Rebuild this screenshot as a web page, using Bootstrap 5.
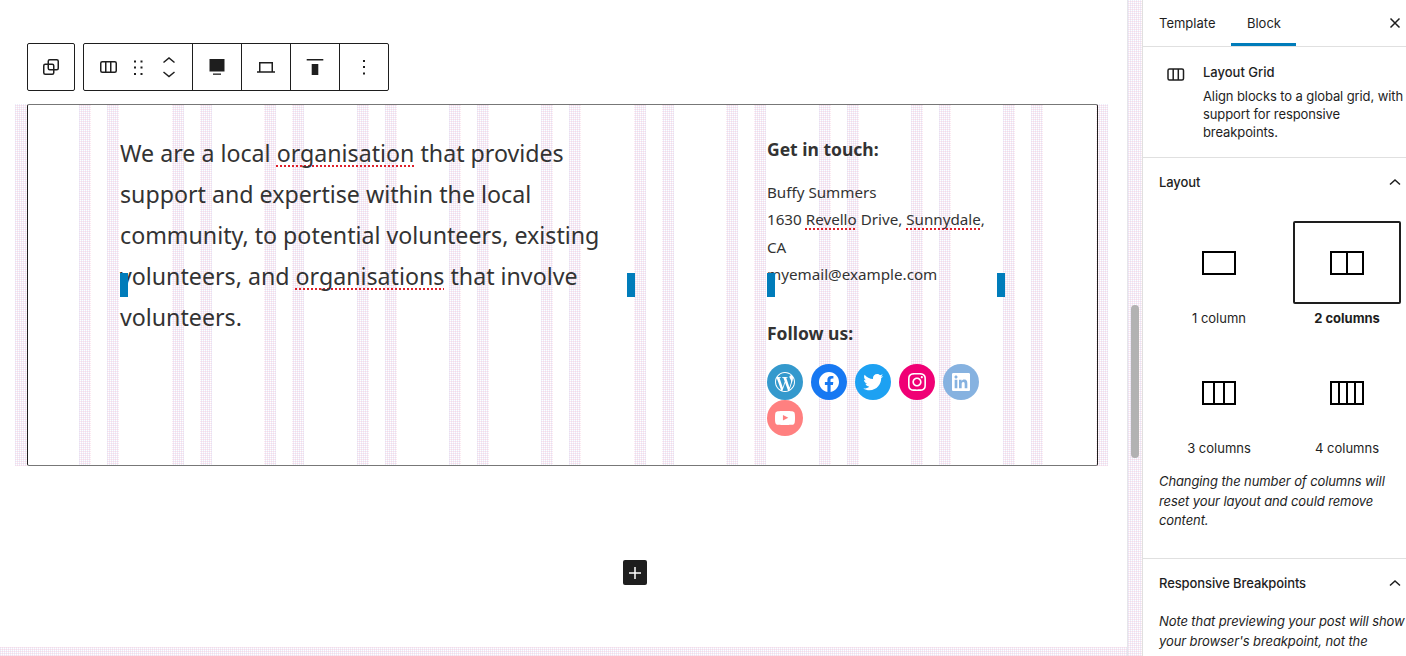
<!DOCTYPE html>
<html lang="en">
<head>
    <meta charset="UTF-8">
    <meta name="viewport" content="width=device-width, initial-scale=1.0">
    <link href="https://cdn.jsdelivr.net/npm/bootstrap@5.3.2/dist/css/bootstrap.min.css" rel="stylesheet"/>
    <script src="https://cdn.jsdelivr.net/npm/bootstrap@5.3.2/dist/js/bootstrap.bundle.min.js"></script>
    <title>Layout Grid</title>
    <style>
        html, body { height: 100%; overflow: hidden; }
        body { background: #fff; color: #1e1e1e; font-family: "Inter", "Liberation Sans", sans-serif; font-size: 13px; }
        .dither { background-image: repeating-linear-gradient(0deg, rgba(245,180,205,.3) 0 1px, transparent 1px 2px), repeating-linear-gradient(90deg, rgba(190,200,240,.3) 0 1px, transparent 1px 2px); }

        /* editor canvas */
        .canvas { width: 1127px; height: 656px; position: relative; overflow: hidden; flex: none; }
        .canvas-inner { padding: 43px 0 0 27px; width: 1098px; }
        .tb { height: 48px; border: 1px solid #1e1e1e; border-radius: 2px; background: #fff; }
        .tb-btn { width: 49px; height: 46px; border-right: 1px solid #1e1e1e; color: #1e1e1e; }
        .tb-btn:last-child { border-right: 0; width: 48px; }
        .tb-solo { width: 46px !important; }
        .tb-type { width: 109px; padding-left: 12px; }
        .drag-dots { margin-left: 9px; }
        .movers { margin-left: 10px; }
        .layout-block { margin-top: 13px; position: relative; height: 362px; }
        .grid-lines { position: absolute; top: 0; bottom: 0; left: -12px; width: 1094px; -webkit-mask-image: repeating-linear-gradient(90deg, #000 0 12px, transparent 12px 64.4px, #000 64.4px 76.4px, transparent 76.4px 92.4px); mask-image: repeating-linear-gradient(90deg, #000 0 12px, transparent 12px 64.4px, #000 64.4px 76.4px, transparent 76.4px 92.4px); }
        .block-frame { position: absolute; inset: 0; border: 1px solid #1e1e1e; border-top-color: #777; border-bottom-color: #777; border-radius: 2px; padding: 27px 0 0 92px; color: #333; font-family: "Noto Sans", sans-serif; }
        .intro-col { width: 647px; flex: none; font-size: 23.2px; line-height: 41px; padding-right: 130px; margin-top: 1px; }
        .contact-col { width: 240px; flex: none; font-size: 15.2px; line-height: 27.4px; }
        .contact-col h6 { font-size: 17.5px; font-weight: 700; line-height: 27px; margin: 0; font-family: "Noto Sans", sans-serif; }
        .spell { text-decoration: underline dotted #e0202a; text-decoration-thickness: 1.5px; text-underline-offset: 3px; text-decoration-skip-ink: none; }
        .handle { position: absolute; top: 169px; width: 8px; height: 24px; background: #007cba; }
        .h1-pos { left: 93px; } .h2-pos { left: 600px; } .h3-pos { left: 740px; } .h4-pos { left: 970px; }
        .follow-h { margin-top: 31px !important; }
        .soc-row { margin-top: 17px; column-gap: 8px; width: 220px; }
        .soc { width: 36px; height: 36px; border-radius: 50%; color: #fff; }
        .soc svg { width: 24px; height: 24px; fill: currentColor; }
        .soc-wp { background: #3499cd; } .soc-fb { background: #1778f2; } .soc-tw { background: #1da1f2; }
        .soc-ig { background: #f00075; } .soc-li { background: #86b2e0; } .soc-yt { background: #ff8080; }
        .add-btn { width: 24px; height: 25px; border-radius: 2px; background: #1e1e1e; color: #fff; margin: 94px 0 0 596px; }
        .next-block { position: absolute; left: 0; right: 0; bottom: 0; height: 9px; }
        .scroll-track { width: 15px; height: 656px; flex: none; position: relative; border-left: 1px solid #e6e6ea; }
        .scroll-thumb { position: absolute; left: 3px; top: 305px; width: 8px; height: 153px; border-radius: 4px; background: #b2b2b2; }

        /* settings sidebar */
        .side { width: 264px; flex: none; height: 656px; overflow: hidden; border-left: 1px solid #e0e0e0; letter-spacing: -.1px; }
        .side-tabs { height: 47px; border-bottom: 1px solid #e0e0e0; padding-left: 16px; position: relative; letter-spacing: 0; }
        .side-tab { line-height: 46px; font-size: 13px; }
        .tab-on { width: 65px; margin-left: 16px; text-align: center; border-bottom: 3px solid #007cba; height: 46px; line-height: 46px; }
        .close-x { position: absolute; right: 3px; top: 15px; }
        .block-card { height: 111px; border-bottom: 1px solid #e0e0e0; padding: 16px 0 0 24px; }
        .block-card p { line-height: 18px; margin: 0; white-space: nowrap; }
        .card-text { margin-left: 18px; }
        .card-name { font-weight: 500; line-height: 18px; margin: 0 0 6px; letter-spacing: 0; }
        .panel-head { height: 50px; padding-left: 16px; font-weight: 500; font-size: 13px; }
        .layout-panel { height: 401px; border-bottom: 1px solid #e0e0e0; }
        .opt-grid { display: grid; grid-template-columns: 108px 108px; column-gap: 20px; margin: 13px 0 0 22px; }
        .opt { height: 130px; text-align: center; font-size: 13px; letter-spacing: 0; }
        .opt-box { height: 83px; border: 2px solid transparent; border-radius: 2px; }
        .opt-on .opt-box { border-color: #1e1e1e; }
        .opt-on .opt-label { font-weight: 700; }
        .opt-label { margin-top: 5px; line-height: 18px; }
        .help-note { font-style: italic; line-height: 19.5px; padding-left: 16px; margin: -9px 0 0; white-space: nowrap; }
        .note-cut { margin-top: 3px; }
    </style>
</head>
<body>
<div class="d-flex">
    <div class="canvas">
        <div class="canvas-inner">
            <div class="d-flex gap-2">
                <div class="tb d-flex">
                    <div class="tb-btn tb-solo d-flex align-items-center justify-content-center">
                        <svg width="24" height="24" viewBox="0 0 24 24" fill="none" stroke="#1e1e1e" stroke-width="1.5"><rect x="9.25" y="4.75" width="10" height="10" rx="1.5"/><rect x="4.75" y="9.25" width="10" height="10" rx="1.5"/></svg>
                    </div>
                </div>
                <div class="tb d-flex">
                    <div class="tb-btn tb-type d-flex align-items-center">
                        <svg width="24" height="24" viewBox="0 0 24 24" fill="none" stroke="#1e1e1e" stroke-width="1.5"><rect x="4.75" y="6.75" width="15.5" height="10.5" rx="1.5"/><path d="M9.75 6.75v10.5M14.75 6.75v10.5"/></svg>
                        <svg width="18" height="24" viewBox="0 0 18 24" fill="#1e1e1e" class="drag-dots"><rect x="5" y="5.5" width="2" height="2"/><rect x="11.5" y="5.5" width="2" height="2"/><rect x="5" y="11.5" width="2" height="2"/><rect x="11.5" y="11.500" width="2" height="2"/><rect x="5" y="18" width="2" height="2"/><rect x="11.5" y="18" width="2" height="2"/></svg>
                        <svg width="24" height="36" viewBox="0 0 24 36" fill="none" stroke="#1e1e1e" stroke-width="1.5" class="movers"><path d="M6.5 13.500 12 9l5.500 4.500M6.500 23 12 27.500l5.500-4.500"/></svg>
                    </div>
                    <div class="tb-btn d-flex align-items-center justify-content-center">
                        <svg width="24" height="24" viewBox="0 0 24 24" fill="#1e1e1e"><rect x="4.500" y="4" width="15" height="12.500"/><rect x="8" y="18.500" width="8" height="1.300"/></svg>
                    </div>
                    <div class="tb-btn d-flex align-items-center justify-content-center">
                        <svg width="24" height="24" viewBox="0 0 24 24" fill="none" stroke="#1e1e1e" stroke-width="1.500"><path d="M5.750 16.500V7.750h12.500v8.750M3 17h18"/></svg>
                    </div>
                    <div class="tb-btn d-flex align-items-center justify-content-center">
                        <svg width="24" height="24" viewBox="0 0 24 24" fill="#1e1e1e"><rect x="3.700" y="4" width="16.600" height="1.500"/><rect x="8.700" y="9" width="6.600" height="11"/></svg>
                    </div>
                    <div class="tb-btn d-flex align-items-center justify-content-center">
                        <svg width="24" height="24" viewBox="0 0 24 24" fill="#1e1e1e"><rect x="11" y="5" width="2" height="2"/><rect x="11" y="11" width="2" height="2"/><rect x="11" y="17.500" width="2" height="2"/></svg>
                    </div>
                </div>
            </div>
            <div class="layout-block">
                <div class="grid-lines dither"></div>
                <div class="block-frame d-flex">
                    <div class="intro-col">We are a local <span class="spell">organisation</span> that provides support and expertise within the local community, to potential volunteers, existing volunteers, and <span class="spell">organisations</span> that involve volunteers.</div>
                    <div class="contact-col">
                        <h6 class="mt-1">Get in touch:</h6>
                        <div class="mt-3">Buffy Summers<br>1630 <span class="spell">Revello</span> Drive, <span class="spell">Sunnydale</span>,<br>CA<br>myemail@example.com</div>
                        <h6 class="follow-h">Follow us:</h6>
                        <div class="d-flex flex-wrap soc-row">
                            <a class="soc d-flex align-items-center justify-content-center soc-wp"><svg viewBox="0 0 24 24"><path d="M12.158,12.786L9.46,20.625c0.806,0.237,1.657,0.366,2.54,0.366c1.047,0,2.051-0.181,2.986-0.51c-0.024-0.038-0.046-0.079-0.065-0.124L12.158,12.786z M3.009,12c0,3.559,2.068,6.634,5.067,8.092L3.788,8.341C3.289,9.459,3.009,10.696,3.009,12z M18.069,11.546c0-1.112-0.399-1.881-0.741-2.48c-0.456-0.741-0.883-1.368-0.883-2.109c0-0.826,0.627-1.596,1.51-1.596c0.04,0,0.078,0.005,0.116,0.007C16.472,3.904,14.34,3.009,12,3.009c-3.141,0-5.904,1.612-7.512,4.052c0.211,0.007,0.41,0.011,0.579,0.011c0.94,0,2.396-0.114,2.396-0.114C7.947,6.93,8.004,7.642,7.52,7.699c0,0-0.487,0.057-1.029,0.085l3.274,9.739l1.968-5.901l-1.401-3.838C9.848,7.756,9.389,7.699,9.389,7.699C8.904,7.67,8.961,6.93,9.446,6.958c0,0,1.484,0.114,2.368,0.114c0.94,0,2.397-0.114,2.397-0.114c0.485-0.028,0.542,0.684,0.057,0.741c0,0-0.488,0.057-1.029,0.085l3.249,9.665l0.897-2.996C17.841,13.284,18.069,12.316,18.069,11.546z M19.889,7.686c0.039,0.286,0.06,0.593,0.06,0.924c0,0.912-0.171,1.938-0.684,3.22l-2.746,7.94c2.673-1.558,4.47-4.454,4.47-7.771C20.991,10.436,20.591,8.967,19.889,7.686z M12,22C6.486,22,2,17.514,2,12C2,6.486,6.486,2,12,2c5.514,0,10,4.486,10,10C22,17.514,17.514,22,12,22z"/></svg></a>
                            <a class="soc d-flex align-items-center justify-content-center soc-fb"><svg viewBox="0 0 24 24"><path d="M12 2C6.500 2 2 6.500 2 12c0 5 3.700 9.100 8.400 9.900v-7H7.900V12h2.500V9.800c0-2.500 1.500-3.900 3.800-3.900 1.100 0 2.200.2 2.200.2v2.500h-1.300c-1.200 0-1.600.8-1.600 1.600V12h2.800l-.4 2.900h-2.300v7C18.300 21.100 22 17 22 12c0-5.500-4.500-10-10-10z"/></svg></a>
                            <a class="soc d-flex align-items-center justify-content-center soc-tw"><svg viewBox="0 0 24 24"><path d="M22.23,5.924c-0.736,0.326-1.527,0.547-2.357,0.646c0.847-0.508,1.498-1.312,1.804-2.27c-0.793,0.47-1.671,0.812-2.606,0.996C18.324,4.498,17.257,4,16.077,4c-2.266,0-4.103,1.837-4.103,4.103c0,0.322,0.036,0.635,0.106,0.935C8.67,8.867,5.647,7.234,3.623,4.751C3.27,5.357,3.067,6.062,3.067,6.814c0,1.424,0.724,2.679,1.825,3.415c-0.673-0.021-1.305-0.206-1.859-0.513c0,0.017,0,0.034,0,0.052c0,1.988,1.414,3.647,3.292,4.023c-0.344,0.094-0.707,0.144-1.081,0.144c-0.264,0-0.521-0.026-0.772-0.074c0.522,1.63,2.038,2.816,3.833,2.85c-1.404,1.1-3.174,1.756-5.096,1.756c-0.331,0-0.658-0.019-0.979-0.057c1.816,1.164,3.973,1.843,6.29,1.843c7.547,0,11.675-6.252,11.675-11.675c0-0.178-0.004-0.355-0.012-0.531C20.985,7.47,21.68,6.747,22.23,5.924z"/></svg></a>
                            <a class="soc d-flex align-items-center justify-content-center soc-ig"><svg viewBox="0 0 24 24"><path d="M12,4.622c2.403,0,2.688,0.009,3.637,0.052c0.877,0.04,1.354,0.187,1.671,0.31c0.42,0.163,0.72,0.358,1.035,0.673c0.315,0.315,0.51,0.615,0.673,1.035c0.123,0.317,0.27,0.794,0.31,1.671c0.043,0.949,0.052,1.234,0.052,3.637s-0.009,2.688-0.052,3.637c-0.04,0.877-0.187,1.354-0.31,1.671c-0.163,0.42-0.358,0.72-0.673,1.035c-0.315,0.315-0.615,0.51-1.035,0.673c-0.317,0.123-0.794,0.27-1.671,0.31c-0.949,0.043-1.233,0.052-3.637,0.052s-2.688-0.009-3.637-0.052c-0.877-0.04-1.354-0.187-1.671-0.31c-0.42-0.163-0.72-0.358-1.035-0.673c-0.315-0.315-0.51-0.615-0.673-1.035c-0.123-0.317-0.27-0.794-0.31-1.671C4.631,14.688,4.622,14.403,4.622,12s0.009-2.688,0.052-3.637c0.04-0.877,0.187-1.354,0.31-1.671c0.163-0.42,0.358-0.72,0.673-1.035c0.315-0.315,0.615-0.51,1.035-0.673c0.317-0.123,0.794-0.27,1.671-0.31C9.312,4.631,9.597,4.622,12,4.622 M12,3C9.556,3,9.249,3.01,8.289,3.054C7.331,3.098,6.677,3.25,6.105,3.472C5.513,3.702,5.011,4.01,4.511,4.511c-0.5,0.5-0.808,1.002-1.038,1.594C3.25,6.677,3.098,7.331,3.054,8.289C3.01,9.249,3,9.556,3,12c0,2.444,0.01,2.751,0.054,3.711c0.044,0.958,0.196,1.612,0.418,2.185c0.23,0.592,0.538,1.094,1.038,1.594c0.5,0.5,1.002,0.808,1.594,1.038c0.572,0.222,1.227,0.375,2.185,0.418C9.249,20.99,9.556,21,12,21s2.751-0.01,3.711-0.054c0.958-0.044,1.612-0.196,2.185-0.418c0.592-0.23,1.094-0.538,1.594-1.038c0.5-0.5,0.808-1.002,1.038-1.594c0.222-0.572,0.375-1.227,0.418-2.185C20.99,14.751,21,14.444,21,12s-0.01-2.751-0.054-3.711c-0.044-0.958-0.196-1.612-0.418-2.185c-0.23-0.592-0.538-1.094-1.038-1.594c-0.5-0.5-1.002-0.808-1.594-1.038c-0.572-0.222-1.227-0.375-2.185-0.418C14.751,3.01,14.444,3,12,3L12,3z M12,7.378c-2.552,0-4.622,2.069-4.622,4.622S9.448,16.622,12,16.622s4.622-2.069,4.622-4.622S14.552,7.378,12,7.378z M12,15c-1.657,0-3-1.343-3-3s1.343-3,3-3s3,1.343,3,3S13.657,15,12,15z M16.804,6.116c-0.596,0-1.08,0.484-1.08,1.08s0.484,1.08,1.08,1.08c0.596,0,1.08-0.484,1.08-1.08S17.401,6.116,16.804,6.116z"/></svg></a>
                            <a class="soc d-flex align-items-center justify-content-center soc-li"><svg viewBox="0 0 24 24"><path d="M19.7,3H4.3C3.582,3,3,3.582,3,4.3v15.4C3,20.418,3.582,21,4.3,21h15.4c0.718,0,1.3-0.582,1.3-1.3V4.3C21,3.582,20.418,3,19.7,3z M8.339,18.338H5.667v-8.59h2.672V18.338z M7.004,8.574c-0.857,0-1.549-0.694-1.549-1.548c0-0.855,0.691-1.548,1.549-1.548c0.854,0,1.547,0.694,1.547,1.548C8.551,7.881,7.858,8.574,7.004,8.574z M18.339,18.338h-2.669v-4.177c0-0.996-0.017-2.278-1.387-2.278c-1.389,0-1.601,1.086-1.601,2.206v4.249h-2.667v-8.59h2.559v1.174h0.037c0.356-0.675,1.227-1.387,2.526-1.387c2.703,0,3.203,1.779,3.203,4.092V18.338z"/></svg></a>
                            <a class="soc d-flex align-items-center justify-content-center soc-yt"><svg viewBox="0 0 24 24"><path d="M21.8,8.001c0,0-0.195-1.378-0.795-1.985c-0.76-0.797-1.613-0.801-2.004-0.847c-2.799-0.202-6.997-0.202-6.997-0.202h-0.009c0,0-4.198,0-6.997,0.202C4.608,5.216,3.756,5.22,2.995,6.016C2.395,6.623,2.2,8.001,2.2,8.001S2,9.62,2,11.238v1.517c0,1.618,0.2,3.237,0.2,3.237s0.195,1.378,0.795,1.985c0.761,0.797,1.76,0.771,2.205,0.855c1.6,0.153,6.8,0.201,6.8,0.201s4.203-0.006,7.001-0.209c0.391-0.047,1.243-0.051,2.004-0.847c0.6-0.607,0.795-1.985,0.795-1.985s0.2-1.618,0.2-3.237v-1.517C22,9.62,21.8,8.001,21.8,8.001z M9.935,14.594l-0.001-5.62l5.404,2.82L9.935,14.594z"/></svg></a>
                        </div>
                    </div>
                </div>
                <span class="handle h1-pos"></span><span class="handle h2-pos"></span><span class="handle h3-pos"></span><span class="handle h4-pos"></span>
            </div>
            <div class="add-btn d-flex align-items-center justify-content-center">
                <svg width="24" height="24" viewBox="0 0 24 24" fill="#fff"><path d="M11.250 6h1.500v5.250H18v1.500h-5.250V18h-1.500v-5.250H6v-1.500h5.250z"/></svg>
            </div>
        </div>
        <div class="next-block dither"></div>
    </div>
    <div class="scroll-track dither"><div class="scroll-thumb"></div></div>
    <aside class="side">
        <div class="side-tabs d-flex">
            <div class="side-tab">Template</div>
            <div class="side-tab tab-on">Block</div>
            <svg class="close-x" width="16" height="16" viewBox="0 0 16 16" fill="none" stroke="#1e1e1e" stroke-width="1.500"><path d="M3.500 3.500l9 9M12.500 3.500l-9 9"/></svg>
        </div>
        <div class="block-card d-flex">
            <svg width="18" height="16" viewBox="0 0 18 16" fill="none" stroke="#1e1e1e" stroke-width="1.500" class="flex-shrink-0 mt-1"><rect x="1" y="2" width="15.500" height="11" rx="1.500"/><path d="M6.200 2v11M11.300 2v11"/></svg>
            <div class="card-text">
                <div class="card-name">Layout Grid</div>
                <p>Align blocks to a global grid, with<br>support for responsive<br>breakpoints.</p>
            </div>
        </div>
        <div class="layout-panel">
            <div class="panel-head d-flex align-items-center justify-content-between">Layout
                <svg width="24" height="24" viewBox="0 0 24 24" fill="none" stroke="#1e1e1e" stroke-width="1.500"><path d="M8 13.500l5-4.500 5 4.500"/></svg>
            </div>
            <div class="opt-grid">
                <div class="opt"><div class="opt-box d-flex align-items-center justify-content-center"><svg width="34" height="24" viewBox="0 0 34 24" fill="none" stroke="#000" stroke-width="2"><rect x="1" y="1" width="32" height="22"/></svg></div><div class="opt-label">1 column</div></div>
                <div class="opt opt-on"><div class="opt-box d-flex align-items-center justify-content-center"><svg width="34" height="24" viewBox="0 0 34 24" fill="none" stroke="#000" stroke-width="2"><rect x="1" y="1" width="32" height="22"/><path d="M17 1v22"/></svg></div><div class="opt-label">2 columns</div></div>
                <div class="opt"><div class="opt-box d-flex align-items-center justify-content-center"><svg width="34" height="24" viewBox="0 0 34 24" fill="none" stroke="#000" stroke-width="2"><rect x="1" y="1" width="32" height="22"/><path d="M12 1v22M22 1v22"/></svg></div><div class="opt-label">3 columns</div></div>
                <div class="opt"><div class="opt-box d-flex align-items-center justify-content-center"><svg width="34" height="24" viewBox="0 0 34 24" fill="none" stroke="#000" stroke-width="2"><rect x="1" y="1" width="32" height="22"/><path d="M9 1v22M17 1v22M25 1v22"/></svg></div><div class="opt-label">4 columns</div></div>
            </div>
            <p class="help-note">Changing the number of columns will<br>reset your layout and could remove<br>content.</p>
        </div>
        <div class="panel-head d-flex align-items-center justify-content-between">Responsive Breakpoints
            <svg width="24" height="24" viewBox="0 0 24 24" fill="none" stroke="#1e1e1e" stroke-width="1.500"><path d="M8 13.500l5-4.500 5 4.500"/></svg>
        </div>
        <p class="help-note note-cut">Note that previewing your post will show<br>your browser's breakpoint, not the</p>
    </aside>
</div>
</body>
</html>
